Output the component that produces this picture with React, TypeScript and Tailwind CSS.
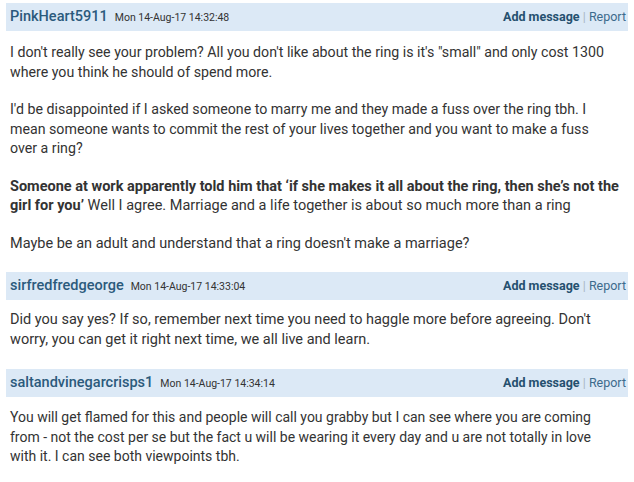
export default function App() {
  return (
    <div className="min-h-[482px] w-[634px] overflow-hidden bg-white px-[6px] pt-[3px] text-[14.5px] leading-[19.5px] text-[#333] [font-family:Roboto,'Liberation_Sans',sans-serif]">
      <Header name="PinkHeart5911" date="Mon 14-Aug-17 14:32:48" />
      <div className="whitespace-nowrap px-[4px] pt-[12px]">
        <p className="text-[14.2px]">
          I don't really see your problem? All you don't like about the ring is it's "small" and only cost 1300
          <br />
          where you think he should of spend more.
        </p>
        <p className="mt-[18px] text-[14.2px]">
          I'd be disappointed if I asked someone to marry me and they made a fuss over the ring tbh. I
          <br />
          mean someone wants to commit the rest of your lives together and you want to make a fuss
          <br />
          over a ring?
        </p>
        <p className="mt-[18px]">
          <b className="font-bold">
            Someone at work apparently told him that ‘if she makes it all about the ring, then she’s not the
            <br />
            girl for you’
          </b>{" "}
          Well I agree. Marriage and a life together is about so much more than a ring
        </p>
        <p className="mt-[18px]">Maybe be an adult and understand that a ring doesn't make a marriage?</p>
      </div>

      <div className="mt-[19px]">
        <Header name="sirfredfredgeorge" date="Mon 14-Aug-17 14:33:04" />
      </div>
      <div className="whitespace-nowrap px-[4px] pt-[10px]">
        <p>
          Did you say yes? If so, remember next time you need to haggle more before agreeing. Don't
          <br />
          worry, you can get it right next time, we all live and learn.
        </p>
      </div>

      <div className="mt-[20px]">
        <Header name="saltandvinegarcrisps1" date="Mon 14-Aug-17 14:34:14" />
      </div>
      <div className="whitespace-nowrap px-[4px] pt-[11px]">
        <p className="text-[14px]">
          You will get flamed for this and people will call you grabby but I can see where you are coming
          <br />
          from - not the cost per se but the fact u will be wearing it every day and u are not totally in love
          <br />
          with it. I can see both viewpoints tbh.
        </p>
      </div>
    </div>
  );
}

function Header({ name, date }: { name: string; date: string }) {
  return (
    <div className="flex h-[28px] items-center justify-between bg-[#dce9f6] pl-[4px] pr-[2px]">
      <div className="flex items-baseline gap-[7px]">
        <span className="text-[14.5px] font-medium text-[#2b5a7c]">{name}</span>
        <span className="text-[10.5px] text-[#333]">{date}</span>
      </div>
      <div className="text-[12.5px]">
        <span className="font-bold text-[#25506f]">Add message</span>
        <span className="text-[#aab8c4]"> | </span>
        <span className="text-[#3d6b8c]">Report</span>
      </div>
    </div>
  );
}
